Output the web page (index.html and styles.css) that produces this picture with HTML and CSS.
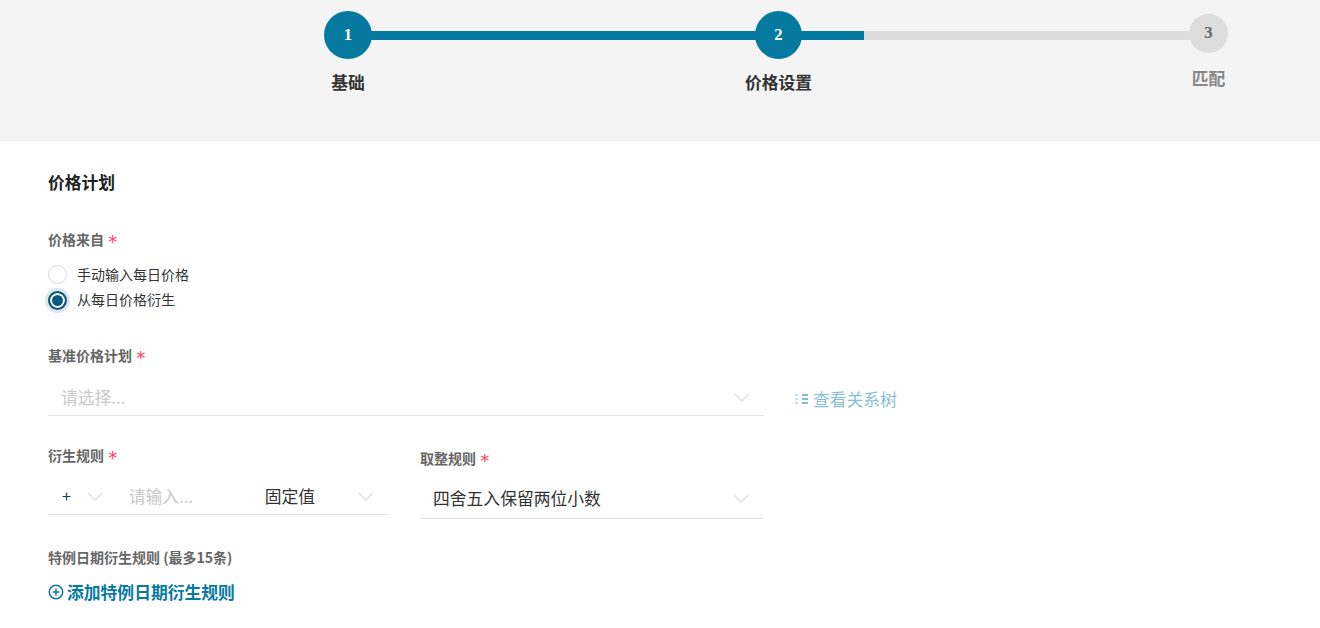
FILE: index.html
```html
<!DOCTYPE html>
<html lang="zh-CN">
<head>
<meta charset="utf-8">
<title>价格计划</title>
<link rel="stylesheet" href="styles.css">
</head>
<body>
<header class="steps-bar">
  <div class="stepper">
    <div class="track"><div class="track-fill"></div></div>
    <div class="step step-one"><div class="bubble">1</div><div class="step-label">基础</div></div>
    <div class="step step-two"><div class="bubble">2</div><div class="step-label">价格设置</div></div>
    <div class="step step-three"><div class="bubble bubble-off">3</div><div class="step-label label-off">匹配</div></div>
  </div>
</header>
<main class="form">
  <h2 class="section-title">价格计划</h2>
  <div class="field-label label-source">价格来自 <span class="star">*</span></div>
  <div class="radios">
    <label class="radio-row"><span class="radio"></span><span>手动输入每日价格</span></label>
    <label class="radio-row"><span class="radio radio-on"></span><span>从每日价格衍生</span></label>
  </div>
  <div class="field-label label-base">基准价格计划 <span class="star">*</span></div>
  <div class="base-row">
    <div class="select select-base">
      <span class="placeholder">请选择...</span>
      <svg class="chev" viewBox="0 0 16 9"><path d="M1 1l7 7 7-7"/></svg>
    </div>
    <a class="tree-link">
      <svg class="tree-icon" viewBox="0 0 14 12"><path class="tree-dots" d="M0 2h3M0 6h3M0 10h3"/><path d="M7 2h6M7 6h6M7 10h6"/></svg>
      查看关系树
    </a>
  </div>
  <div class="rules">
    <div class="rule rule-derive">
      <div class="field-label">衍生规则 <span class="star">*</span></div>
      <div class="derive-input">
        <span class="op">+</span>
        <svg class="chev" viewBox="0 0 16 9"><path d="M1 1l7 7 7-7"/></svg>
        <span class="placeholder derive-ph">请输入...</span>
        <span class="value fixed">固定值</span>
        <svg class="chev" viewBox="0 0 16 9"><path d="M1 1l7 7 7-7"/></svg>
      </div>
    </div>
    <div class="rule rule-round">
      <div class="field-label">取整规则 <span class="star">*</span></div>
      <div class="select select-round">
        <span class="value">四舍五入保留两位小数</span>
        <svg class="chev" viewBox="0 0 16 9"><path d="M1 1l7 7 7-7"/></svg>
      </div>
    </div>
  </div>
  <div class="field-label label-special">特例日期衍生规则 (最多15条)</div>
  <a class="add-link">
    <svg class="add-icon" viewBox="0 0 16 16"><circle cx="8" cy="8" r="6.7"/><path d="M4.6 8h6.8M8 4.6v6.8"/></svg>
    添加特例日期衍生规则
  </a>
</main>
</body>
</html>
```
FILE: styles.css
```css
* { box-sizing: border-box; }
html, body { margin: 0; padding: 0; }
body {
  background: #fff;
  font-family: "Noto Sans CJK SC", "Liberation Sans", sans-serif;
  color: #333;
  height: 628px;
  overflow: hidden;
}
.steps-bar {
  height: 141px;
  background: #f4f4f4;
  border-bottom: 1px solid #eeeeee;
  padding: 11px 0 0 324px;
}
.stepper {
  position: relative;
  width: 904px;
  display: flex;
  align-items: flex-start;
}
.track {
  position: absolute;
  left: 24px;
  right: 20px;
  top: 20px;
  height: 9px;
  background: #dcdcdc;
}
.track-fill { width: 516px; height: 100%; background: #05799f; }
.step {
  position: relative;
  display: flex;
  flex-direction: column;
  align-items: center;
  width: 48px;
}
.step-two { width: 47px; margin-left: 383px; }
.step-three { width: 39px; margin-left: 387px; padding-top: 3px; }
.bubble {
  width: 48px;
  height: 48px;
  flex: none;
  border-radius: 50%;
  background: #05799f;
  color: #fff;
  font: bold 16.8px/48px "Liberation Serif", serif;
  text-align: center;
}
.step-two .bubble { width: 47px; }
.bubble-off {
  width: 39px;
  height: 39px;
  background: #dddddd;
  color: #666;
  line-height: 37px;
}
.step-label {
  margin-top: 11px;
  font-size: 16.8px;
  line-height: 24px;
  font-weight: 700;
  color: #333;
  white-space: nowrap;
}
.label-off { margin-top: 13px; color: #888; }
.form { padding: 0 0 0 48px; }
.section-title {
  margin: 29px 0 0;
  font-size: 16.8px;
  line-height: 24px;
  font-weight: 700;
  color: #222;
}
.field-label {
  font-size: 14px;
  line-height: 18px;
  font-weight: 700;
  color: #666;
  white-space: nowrap;
}
.star {
  display: inline-block;
  margin-left: 1px;
  color: #f9435e;
  font-family: "DejaVu Sans", sans-serif;
  font-size: 18px;
  line-height: 18px;
  font-weight: 400;
  transform: translateY(3px);
}
.label-source { margin-top: 36px; }
.radios { margin-top: 13px; display: flex; flex-direction: column; }
.radio-row {
  display: flex;
  align-items: center;
  height: 25px;
  font-size: 14px;
  color: #333;
}
.radio {
  width: 19px;
  height: 19px;
  margin: 2px 10px 0 0;
  border: 1px solid #d9d9d9;
  border-radius: 50%;
  background: #fff;
  flex: none;
}
.radio-on {
  margin-top: 4px;
  border: 2px solid #0d5a80;
  background: #0d5a80;
  box-shadow: inset 0 0 0 2px #fff, 0 0 0 3px #dbe6ed;
}
.label-base { margin-top: 35px; }
.base-row { display: flex; align-items: flex-end; margin-top: 11px; }
.select {
  display: flex;
  align-items: center;
  justify-content: space-between;
  border-bottom: 1px solid #e4e4e4;
  padding: 0 14px 0 13px;
  font-size: 16.8px;
}
.select-base { width: 716px; height: 41px; padding-top: 4px; }
.placeholder { color: #c8c8c8; }
.value { color: #333; }
.chev {
  width: 16px;
  height: 9px;
  flex: none;
  fill: none;
  stroke: #e2e2e2;
  stroke-width: 1.5;
}
.tree-link {
  display: flex;
  align-items: center;
  margin: 0 0 5px 31px;
  font-size: 16.8px;
  line-height: 24px;
  color: #85bfd3;
}
.tree-icon {
  width: 14px;
  height: 12px;
  margin-right: 4px;
  fill: none;
  stroke: #85bfd3;
  stroke-width: 2;
}
.tree-dots { stroke: #c6e0ea; }
.rules { display: flex; align-items: flex-start; margin-top: 30px; }
.rule-derive { width: 340px; }
.rule-round { width: 343px; margin-left: 32px; padding-top: 3px; }
.derive-input {
  display: flex;
  align-items: center;
  height: 41px;
  margin-top: 10px;
  padding: 4px 14px 0 13px;
  border-bottom: 1px solid #e4e4e4;
  font-size: 16.8px;
}
.op { width: 26px; padding: 0 0 2px 1px; color: #16365c; font-size: 16px; font-weight: 400; }
.derive-ph { margin-left: 26px; width: 137px; }
.fixed { width: 94px; }
.select-round { height: 41px; margin-top: 11px; }
.label-special { margin-top: 29px; }
.add-link {
  display: flex;
  align-items: center;
  margin-top: 14px;
  font-size: 16.8px;
  line-height: 24px;
  font-weight: 700;
  color: #05799f;
}
.add-icon {
  width: 16px;
  height: 16px;
  margin-right: 3px;
  fill: none;
  stroke: #05799f;
  stroke-width: 1.5;
}
```
